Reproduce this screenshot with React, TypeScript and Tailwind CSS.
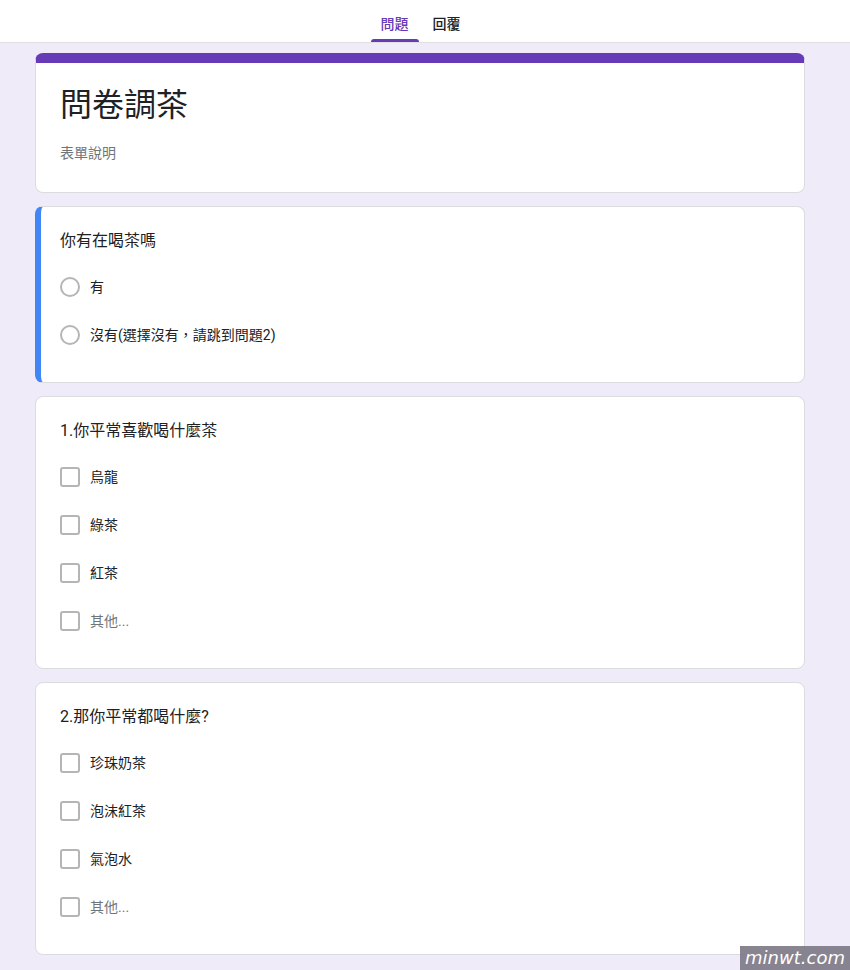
import React from "react";

const font = { fontFamily: 'Roboto, "Noto Sans CJK TC", "Noto Sans", sans-serif' };

function Radio({ label }: { label: string }) {
  return (
    <div className="flex h-[48px] items-center">
      <div className="h-[20px] w-[20px] rounded-full border-2 border-[#b5b5b5]" />
      <span className="ml-[10px] text-[14px] leading-[20px] text-[#202124]">{label}</span>
    </div>
  );
}

function Check({ label, muted }: { label: string; muted?: boolean }) {
  return (
    <div className="flex h-[48px] items-center">
      <div className="h-[20px] w-[20px] rounded-[3px] border-2 border-[#b5b5b5]" />
      <span
        className={
          "ml-[10px] text-[14px] leading-[20px] " +
          (muted ? "text-[#70757a]" : "text-[#202124]")
        }
      >
        {label}
      </span>
    </div>
  );
}

export default function App() {
  return (
    <div className="relative min-h-[970px] bg-[#f0ebf8]" style={font}>
      <div className="h-[43px] border-b border-[#e0e0e0] bg-white">
        <div className="flex h-[42px] justify-center gap-[4px] pr-[9px]">
          <div className="relative flex items-center px-[10px] pt-[6px] text-[14px] font-medium text-[#673ab7]">
            問題
            <div className="absolute bottom-0 left-0 right-0 h-[3px] rounded-t-[3px] bg-[#673ab7]" />
          </div>
          <div className="flex items-center px-[10px] pt-[6px] text-[14px] font-medium text-[#202124]">
            回覆
          </div>
        </div>
      </div>

      <div className="ml-[35px] flex w-[770px] flex-col gap-[13px] pt-[10px] pb-[15px]">
        <div className="rounded-[8px] border border-t-[10px] border-[#dadce0] border-t-[#673ab7] bg-white px-[24px] pt-[22px] pb-[29px]">
          <div className="text-[32px] leading-[40px] text-[#202124]">問卷調茶</div>
          <div className="mt-[18px] text-[14px] leading-[20px] text-[#70757a]">表單說明</div>
        </div>

        <div className="rounded-[8px] border border-l-[6px] border-[#dadce0] border-l-[#4285f4] bg-white pl-[19px] pr-[24px] pt-[22px] pb-[23px]">
          <div className="text-[16px] leading-[24px] text-[#202124]">你有在喝茶嗎</div>
          <div className="mt-[10px]">
            <Radio label="有" />
            <Radio label="沒有(選擇沒有，請跳到問題2)" />
          </div>
        </div>

        <div className="rounded-[8px] border border-[#dadce0] bg-white px-[24px] pt-[22px] pb-[23px]">
          <div className="text-[16px] leading-[24px] text-[#202124]">1.你平常喜歡喝什麼茶</div>
          <div className="mt-[10px]">
            <Check label="烏龍" />
            <Check label="綠茶" />
            <Check label="紅茶" />
            <Check label="其他..." muted />
          </div>
        </div>

        <div className="rounded-[8px] border border-[#dadce0] bg-white px-[24px] pt-[22px] pb-[23px]">
          <div className="text-[16px] leading-[24px] text-[#202124]">2.那你平常都喝什麼?</div>
          <div className="mt-[10px]">
            <Check label="珍珠奶茶" />
            <Check label="泡沫紅茶" />
            <Check label="氣泡水" />
            <Check label="其他..." muted />
          </div>
        </div>
      </div>

      <div
        className="absolute bottom-0 right-0 flex h-[24px] w-[110px] items-center justify-center bg-[#7b7884]/90 text-[18px] italic leading-none text-white"
        style={{ fontFamily: '"DejaVu Sans", sans-serif' }}
      >
        minwt.com
      </div>
    </div>
  );
}
